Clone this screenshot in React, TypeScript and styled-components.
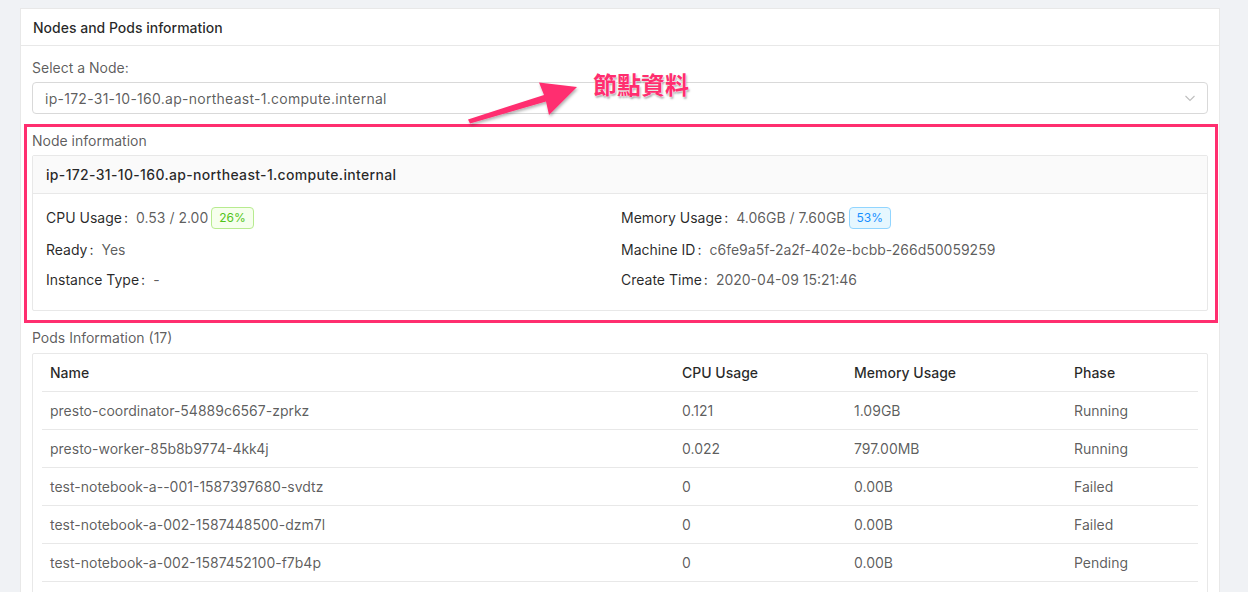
import React from 'react';
import styled, { createGlobalStyle } from 'styled-components';

const GlobalStyle = createGlobalStyle`
  body {
    margin: 0;
    background: #f0f2f5;
    font-family: Inter, "Liberation Sans", sans-serif;
    font-size: 14px;
    color: rgba(0, 0, 0, 0.65);
  }
`;

type Pod = {
  name: string;
  cpu: string;
  memory: string;
  phase: string;
};

const pods: Pod[] = [
  { name: 'presto-coordinator-54889c6567-zprkz', cpu: '0.121', memory: '1.09GB', phase: 'Running' },
  { name: 'presto-worker-85b8b9774-4kk4j', cpu: '0.022', memory: '797.00MB', phase: 'Running' },
  { name: 'test-notebook-a--001-1587397680-svdtz', cpu: '0', memory: '0.00B', phase: 'Failed' },
  { name: 'test-notebook-a-002-1587448500-dzm7l', cpu: '0', memory: '0.00B', phase: 'Failed' },
  { name: 'test-notebook-a-002-1587452100-f7b4p', cpu: '0', memory: '0.00B', phase: 'Pending' },
];

const nodeName = 'ip-172-31-10-160.ap-northeast-1.compute.internal';

const App: React.FC = () => {
  return (
    <>
      <GlobalStyle />
      <Page>
        <Card>
          <CardHeader>Nodes and Pods information</CardHeader>
          <CardBody>
            <FieldLabel>Select a Node:</FieldLabel>
            <Select>
              <SelectValue>{nodeName}</SelectValue>
              <svg width="12" height="12" viewBox="0 0 12 12" fill="none">
                <path d="M1.5 4l4.5 4.5L10.5 4" stroke="#bfbfbf" strokeWidth="1.1" />
              </svg>
            </Select>

            <NodeSection>
              <SectionLabel>Node information</SectionLabel>
              <InnerCard>
                <InnerHeader>{nodeName}</InnerHeader>
                <InfoGrid>
                  <InfoItem $height={33}>
                    <InfoLabel>CPU Usage</InfoLabel>
                    <InfoValue>0.53 / 2.00</InfoValue>
                    <Tag $tone="green">26%</Tag>
                  </InfoItem>
                  <InfoItem $height={33}>
                    <InfoLabel>Memory Usage</InfoLabel>
                    <InfoValue>4.06GB / 7.60GB</InfoValue>
                    <Tag $tone="blue">53%</Tag>
                  </InfoItem>
                  <InfoItem $height={30}>
                    <InfoLabel>Ready</InfoLabel>
                    <InfoValue>Yes</InfoValue>
                  </InfoItem>
                  <InfoItem $height={30}>
                    <InfoLabel>Machine ID</InfoLabel>
                    <InfoValue>c6fe9a5f-2a2f-402e-bcbb-266d50059259</InfoValue>
                  </InfoItem>
                  <InfoItem $height={30}>
                    <InfoLabel>Instance Type</InfoLabel>
                    <InfoValue>-</InfoValue>
                  </InfoItem>
                  <InfoItem $height={30}>
                    <InfoLabel>Create Time</InfoLabel>
                    <InfoValue>2020-04-09 15:21:46</InfoValue>
                  </InfoItem>
                </InfoGrid>
              </InnerCard>
            </NodeSection>

            <PodsSection>
              <SectionLabel>Pods Information (17)</SectionLabel>
              <TableCard>
                <TableRow $head>
                  <Cell>Name</Cell>
                  <Cell>CPU Usage</Cell>
                  <Cell>Memory Usage</Cell>
                  <Cell>Phase</Cell>
                </TableRow>
                {pods.map((pod) => (
                  <TableRow key={pod.name}>
                    <Cell>{pod.name}</Cell>
                    <Cell>{pod.cpu}</Cell>
                    <Cell>{pod.memory}</Cell>
                    <Cell>{pod.phase}</Cell>
                  </TableRow>
                ))}
              </TableCard>
            </PodsSection>
          </CardBody>
        </Card>

        <Annotation>
          <svg width="130" height="70" viewBox="460 60 130 70">
            <defs>
              <filter id="arrowShadow" x="-20%" y="-40%" width="140%" height="180%">
                <feDropShadow dx="1" dy="2" stdDeviation="1.5" floodColor="#000" floodOpacity="0.3" />
              </filter>
            </defs>
            <polygon
              points="468,119.5 544,95 539,82.5 577,87 549,115 546,101.5 470,123.5"
              fill="#ff2e6f"
              filter="url(#arrowShadow)"
            />
          </svg>
          <AnnotationText>節點資料</AnnotationText>
        </Annotation>
      </Page>
    </>
  );
};

const Page = styled.div`
  position: relative;
  padding: 8px 0 0 20px;
  height: 584px;
  overflow: hidden;
`;

const Card = styled.section`
  width: 1200px;
  box-sizing: border-box;
  background: #fff;
  border: 1px solid #e8e8e8;
  border-bottom: none;
`;

const CardHeader = styled.div`
  height: 36px;
  display: flex;
  align-items: center;
  padding: 0 12px;
  border-bottom: 1px solid #e8e8e8;
  font-weight: 500;
  color: rgba(0, 0, 0, 0.85);
`;

const CardBody = styled.div`
  padding: 11px 11px 0 11px;
`;

const FieldLabel = styled.div`
  line-height: 22px;
  margin-bottom: 3px;
`;

const Select = styled.div`
  height: 32px;
  box-sizing: border-box;
  display: flex;
  align-items: center;
  justify-content: space-between;
  padding: 0 11px 0 12px;
  border: 1px solid #d9d9d9;
  border-radius: 4px;
  color: rgba(0, 0, 0, 0.65);
`;

const SelectValue = styled.span`
  letter-spacing: 0.27px;
`;

const NodeSection = styled.div`
  position: relative;
  margin-top: 16px;

  &::after {
    content: '';
    position: absolute;
    top: -6px;
    left: -8px;
    right: -10px;
    bottom: -12px;
    border: 3px solid #ff2e6f;
    pointer-events: none;
  }
`;

const SectionLabel = styled.div`
  line-height: 22px;
  margin-bottom: 3px;
`;

const InnerCard = styled.div`
  border: 1px solid #e8e8e8;
  border-radius: 2px;
`;

const InnerHeader = styled.div`
  height: 37px;
  display: flex;
  align-items: center;
  padding: 0 13px;
  background: #fafafa;
  border-bottom: 1px solid #e8e8e8;
  font-weight: 500;
  letter-spacing: 0.33px;
  color: rgba(0, 0, 0, 0.85);
`;

const InfoGrid = styled.div`
  display: grid;
  grid-template-columns: 575px 1fr;
  padding: 7px 13px 16px;
`;

const InfoItem = styled.div<{ $height: number }>`
  height: ${({ $height }) => $height}px;
  display: flex;
  align-items: center;
  white-space: nowrap;
`;

const InfoLabel = styled.span`
  color: rgba(0, 0, 0, 0.85);

  &::after {
    content: ':';
    margin: 0 8px 0 2px;
  }
`;

const InfoValue = styled.span`
  color: rgba(0, 0, 0, 0.65);
`;

const Tag = styled.span<{ $tone: 'green' | 'blue' }>`
  display: inline-block;
  margin-left: 3px;
  padding: 0 7px;
  height: 20px;
  line-height: 20px;
  font-size: 12px;
  border-radius: 4px;
  border: 1px solid ${({ $tone }) => ($tone === 'green' ? '#b7eb8f' : '#91d5ff')};
  background: ${({ $tone }) => ($tone === 'green' ? '#f6ffed' : '#e6f7ff')};
  color: ${({ $tone }) => ($tone === 'green' ? '#52c41a' : '#1890ff')};
`;

const PodsSection = styled.div`
  margin-top: 16px;

  ${SectionLabel} {
    margin-bottom: 4px;
  }
`;

const TableCard = styled.div`
  border: 1px solid #e8e8e8;
  border-radius: 2px;
  padding: 0 9px 60px;
`;

const TableRow = styled.div<{ $head?: boolean }>`
  display: grid;
  grid-template-columns: 632px 172px 220px 1fr;
  height: 38px;
  box-sizing: border-box;
  align-items: center;
  border-bottom: 1px solid #e8e8e8;
  font-weight: ${({ $head }) => ($head ? 500 : 400)};
  color: ${({ $head }) => ($head ? 'rgba(0, 0, 0, 0.85)' : 'rgba(0, 0, 0, 0.65)')};
`;

const Cell = styled.div`
  padding: 0 8px;
  white-space: nowrap;
`;

const Annotation = styled.div`
  position: absolute;
  left: 460px;
  top: 60px;
  pointer-events: none;

  svg {
    display: block;
  }
`;

const AnnotationText = styled.span`
  position: absolute;
  left: 133px;
  top: 10px;
  font-family: "Noto Sans CJK TC", "Noto Sans CJK SC", sans-serif;
  font-weight: 700;
  font-size: 24px;
  line-height: 28px;
  white-space: nowrap;
  color: #ff2e6f;
  text-shadow: 0 0 1px #fff, 0 0 2px #fff, 1px 2px 2px rgba(0, 0, 0, 0.35);
`;

export default App;
